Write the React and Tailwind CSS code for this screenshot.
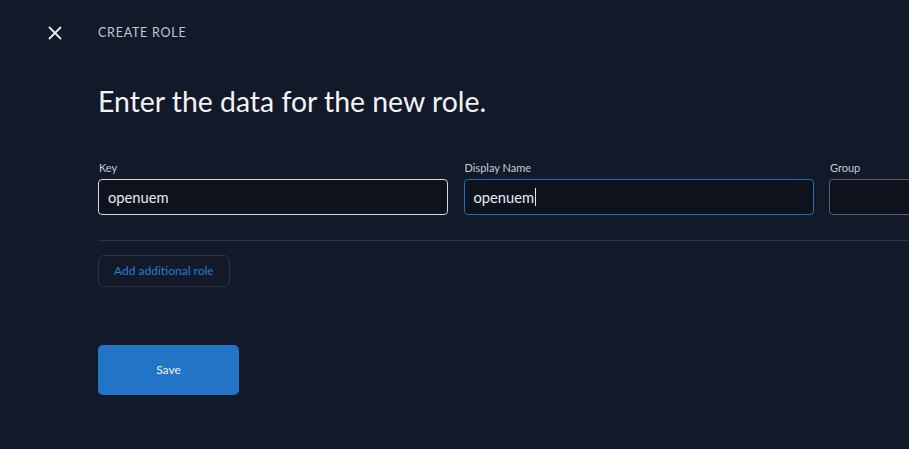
import React from 'react';

const Field = ({ label, value, focused, active }) => (
  <div className="flex flex-col w-[350px] shrink-0">
    <label className="text-[11px] leading-[14px] text-[#c7cbd3] mb-[4px] pl-[1px]">{label}</label>
    <div
      className={
        'h-[36px] rounded-[4px] bg-[#0e121c] flex items-center px-[9px] text-[14.7px] text-[#e8eaee] border ' +
        (focused ? 'border-[#1f6fc0]' : active ? 'border-[#d5d8de]' : 'border-[#5b606a]')
      }
    >
      {value}
      {focused && <span className="inline-block w-px h-[18px] bg-[#e8eaee] ml-px" />}
    </div>
  </div>
);

export default function App() {
  return (
    <div
      className="w-[909px] h-[449px] bg-[#121929] overflow-hidden text-white"
      style={{ fontFamily: 'Lato, "Noto Sans", sans-serif' }}
    >
      <div className="flex items-center h-[66px] pl-[48px]">
        <svg width="14" height="14" viewBox="0 0 14 14" className="text-[#e8eaee]">
          <path d="M1.5 1.5 L12.5 12.5 M12.5 1.5 L1.5 12.5" stroke="currentColor" strokeWidth="1.8" strokeLinecap="round" />
        </svg>
        <span className="ml-[36px] text-[12.5px] tracking-[0.06em] text-[#c3c7cf] uppercase">Create role</span>
      </div>

      <div className="pl-[98px]">
        <h1 className="mt-[17px] text-[28.4px] leading-[36px] text-[#f2f3f5]">Enter the data for the new role.</h1>

        <div className="flex gap-[15.5px] mt-[42px]">
          <Field label="Key" value="openuem" active />
          <Field label="Display Name" value="openuem" focused />
          <Field label="Group" value="" />
        </div>

        <div className="h-px bg-[#2c3243] mt-[25px]" />

        <button className="mt-[14px] h-[32px] px-[15px] rounded-[6px] border border-[#2c3243] text-[12px] text-[#2a7bd4]">
          Add additional role
        </button>

        <div className="mt-[58px]">
          <button className="w-[141px] h-[50px] rounded-[5px] bg-[#2174c6] text-[12px] text-[#eef2f8]">Save</button>
        </div>
      </div>
    </div>
  );
}
